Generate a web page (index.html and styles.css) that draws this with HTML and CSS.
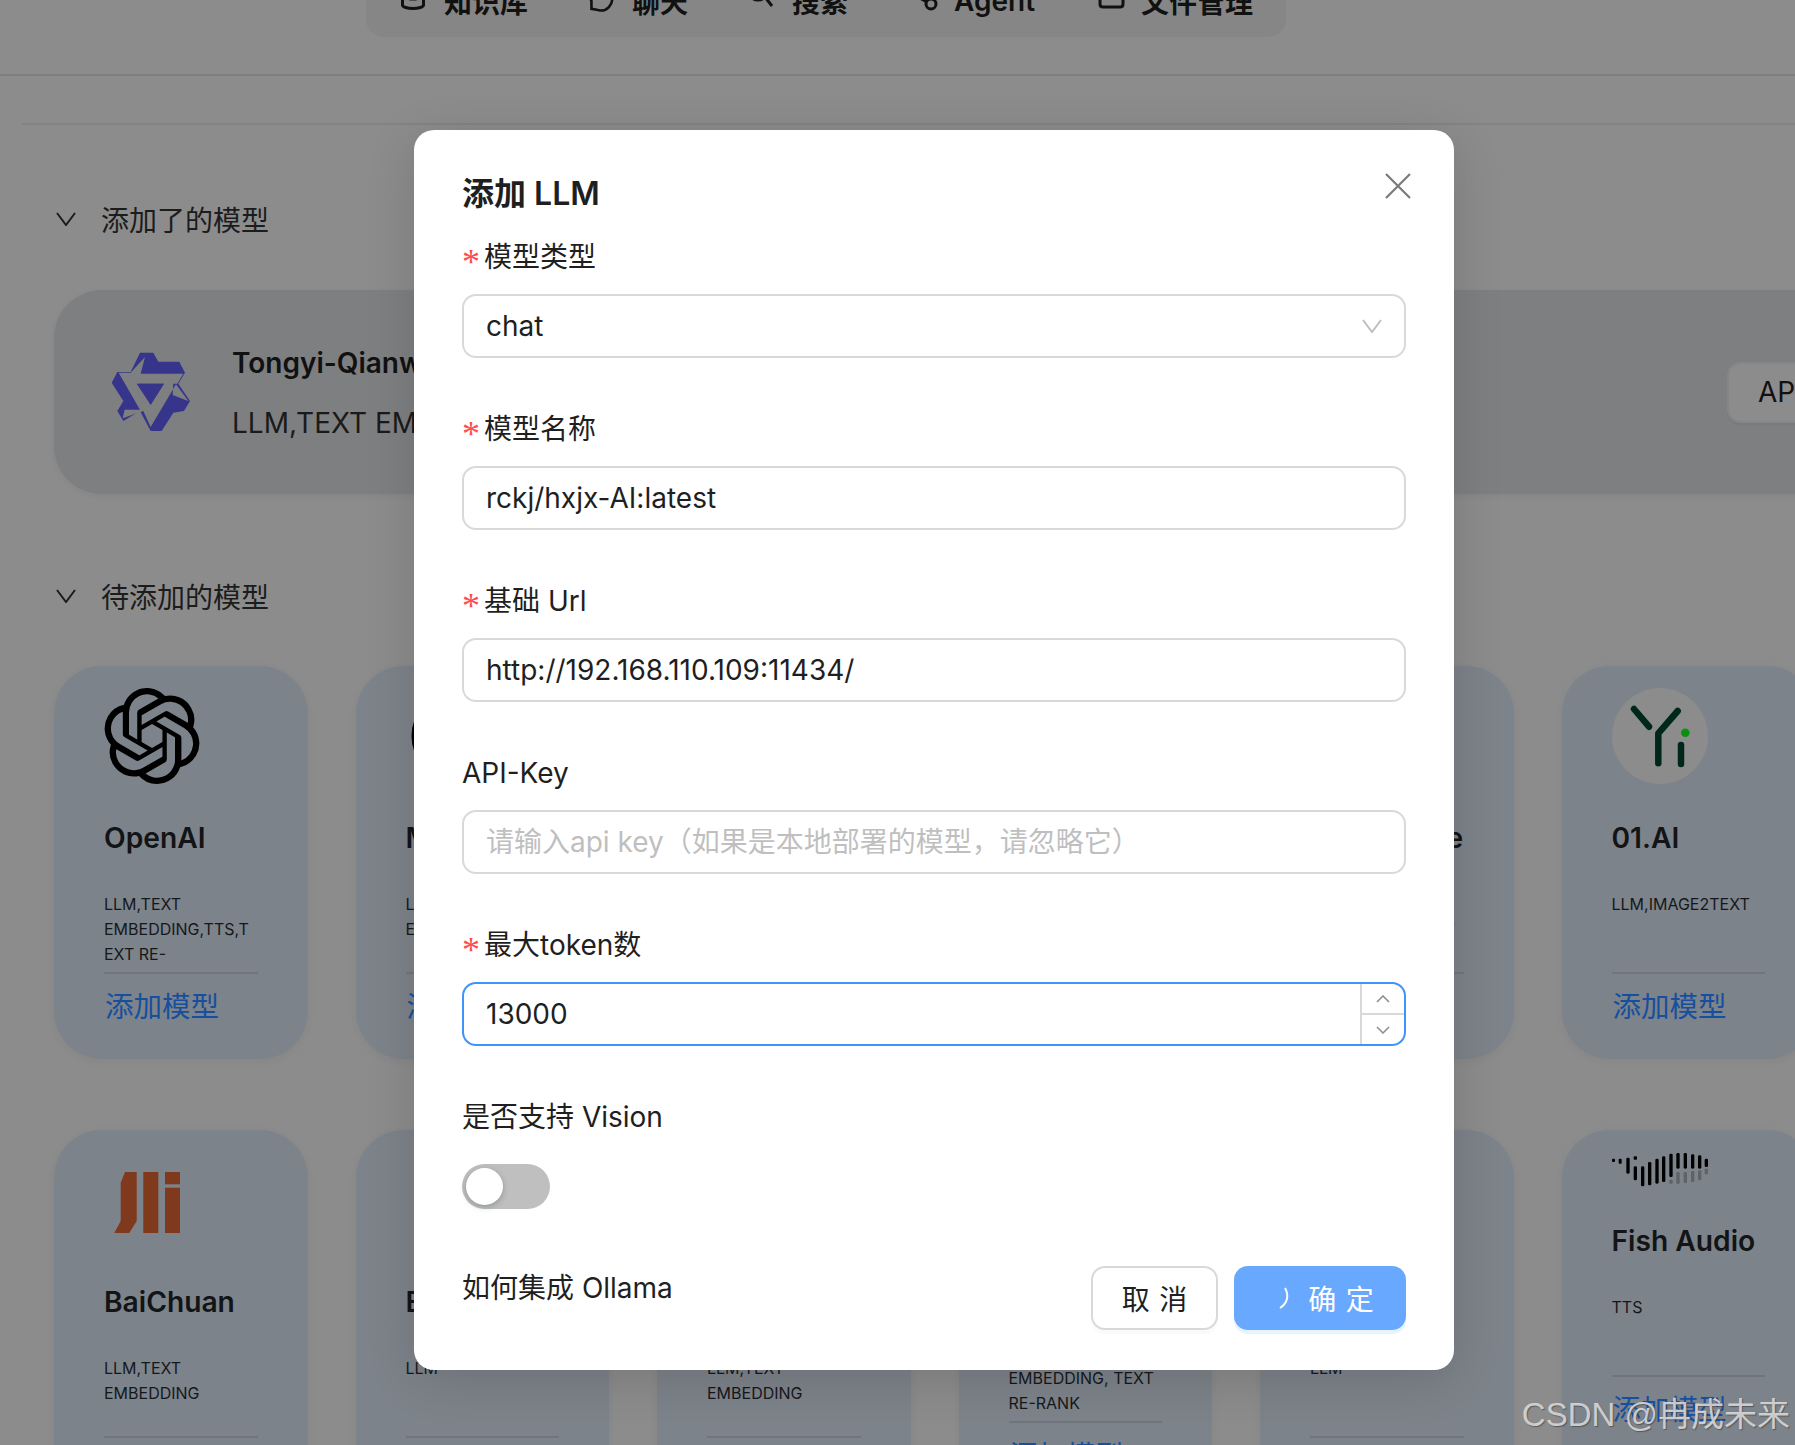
FILE: index.html
```html
<!DOCTYPE html>
<html lang="zh-CN">
<head>
<meta charset="utf-8">
<title>添加 LLM</title>
<link rel="stylesheet" href="styles.css">
</head>
<body>
<div class="page">
  <header class="topbar">
    <nav class="nav">
      <a class="nav-item"><svg class="nav-icon" viewBox="0 0 26 26"><ellipse cx="13" cy="6" rx="10.500" ry="5"/><path d="M2.500 6v11c0 2 5 3.500 10.500 3.500s10.500-1.500 10.500-3.500V6"/></svg>知识库</a>
      <a class="nav-item"><svg class="nav-icon" viewBox="0 0 30 26"><path d="M15 -6C7 -6 2 -1 2 6c0 3 1 5 2 7v9l6 1c2 1 3 1 5 1 7 0 13-6 13-14"/></svg>聊天</a>
      <a class="nav-item"><svg class="nav-icon" viewBox="0 0 26 26"><circle cx="10" cy="2" r="10"/><path d="M17 9l7 9"/></svg>搜索</a>
      <a class="nav-item nav-item-wide"><svg class="nav-icon" viewBox="0 0 26 26"><circle cx="5" cy="6" r="3.500"/><circle cx="21" cy="16" r="5"/><path d="M8 9l9 5M10 4l7 3"/></svg>Agent</a>
      <a class="nav-item"><svg class="nav-icon" viewBox="0 0 26 26"><path d="M3 -6v22c0 2 1 3 3 3h17c2 0 3-1 3-3V-6"/></svg>文件管理</a>
    </nav>
  </header>

  <main class="content">
    <div class="subline"></div>

    <div class="section-head first">
      <svg class="chevron" viewBox="0 0 20 14"><path d="M1 1l9 12 9-12"/></svg>
      <span>添加了的模型</span>
    </div>
    <section class="added-card">
      <div class="added-logo">
        <svg viewBox="0 0 96 96" width="96" height="96">
          <g transform="translate(-14 -13) scale(.3333)">
            <path class="qw-blue" d="M150 65H190L205 92H268L285 125L265 158L300 210L282 240L250 245L215 300H182L150 240L100 270L82 240L100 210L65 155L82 123H122Z"/>
            <path class="qw-gray" d="M165 78L122 125H86L150 236H104L98 262L160 240L182 288L258 160L295 210L248 192L250 158H262L280 128H152ZM140 158H222L182 222Z"/>
            <path class="qw-blue" d="M145 158H222L182 220Z"/>
          </g>
        </svg>
      </div>
      <div class="added-info">
        <div class="added-name">Tongyi-Qianwen</div>
        <div class="added-tags">LLM,TEXT EMBEDDING,TEXT RE-RANK,TTS,SPEECH2TEXT,MODERATION</div>
      </div>
      <button class="api-btn">API-Key</button>
    </section>

    <div class="section-head second">
      <svg class="chevron" viewBox="0 0 20 14"><path d="M1 1l9 12 9-12"/></svg>
      <span>待添加的模型</span>
    </div>

    <section class="grid">
      <article class="card">
        <div class="card-icon">
          <svg viewBox="0 0 24 24" width="96" height="96"><path d="M22.2819 9.8211a5.9847 5.9847 0 0 0-.5157-4.9108 6.0462 6.0462 0 0 0-6.5098-2.9A6.0651 6.0651 0 0 0 4.9807 4.1818a5.9847 5.9847 0 0 0-3.9977 2.9 6.0462 6.0462 0 0 0 .7427 7.0966 5.98 5.98 0 0 0 .511 4.9107 6.051 6.051 0 0 0 6.5146 2.9001A5.9847 5.9847 0 0 0 13.2599 24a6.0557 6.0557 0 0 0 5.7718-4.2058 5.9894 5.9894 0 0 0 3.9977-2.9001 6.0557 6.0557 0 0 0-.7475-7.0729zm-9.022 12.6081a4.4755 4.4755 0 0 1-2.8764-1.0408l.1419-.0804 4.7783-2.7582a.7948.7948 0 0 0 .3927-.6813v-6.7369l2.02 1.1686a.071.071 0 0 1 .038.052v5.5826a4.504 4.504 0 0 1-4.4945 4.4944zm-9.6607-4.1254a4.4708 4.4708 0 0 1-.5346-3.0137l.142.0852 4.783 2.7582a.7712.7712 0 0 0 .7806 0l5.8428-3.3685v2.3324a.0804.0804 0 0 1-.0332.0615L9.74 19.9502a4.4992 4.4992 0 0 1-6.1408-1.6464zM2.3408 7.8956a4.485 4.485 0 0 1 2.3655-1.9728V11.6a.7664.7664 0 0 0 .3879.6765l5.8144 3.3543-2.0201 1.1685a.0757.0757 0 0 1-.071 0l-4.8303-2.7865A4.504 4.504 0 0 1 2.3408 7.872zm16.5963 3.8558L13.1038 8.364 15.1192 7.2a.0757.0757 0 0 1 .071 0l4.8303 2.7913a4.4944 4.4944 0 0 1-.6765 8.1042v-5.6772a.79.79 0 0 0-.407-.667zm2.0107-3.0231l-.142-.0852-4.7735-2.7818a.7759.7759 0 0 0-.7854 0L9.409 9.2297V6.8974a.0662.0662 0 0 1 .0284-.0615l4.8303-2.7866a4.4992 4.4992 0 0 1 6.6802 4.66zM8.3065 12.863l-2.02-1.1638a.0804.0804 0 0 1-.038-.0567V6.0742a4.4992 4.4992 0 0 1 7.3757-3.4537l-.142.0805L8.704 5.459a.7948.7948 0 0 0-.3927.6813zm1.0976-2.3654l2.602-1.4998 2.6069 1.4998v2.9994l-2.5974 1.4997-2.6067-1.4997Z"/></svg>
        </div>
        <h3 class="card-title">OpenAI</h3>
        <p class="card-tags">LLM,TEXT EMBEDDING,TTS,TEXT RE-RANK,SPEECH2TEXT,MODERATION</p>
        <a class="card-link">添加模型</a>
      </article>
      <article class="card">
        <div class="card-icon"><svg viewBox="0 0 96 96" width="96" height="96"><circle class="ring" cx="48" cy="48" r="40"/></svg></div>
        <h3 class="card-title">Moonshot</h3>
        <p class="card-tags">LLM,TEXT EMBEDDING</p>
        <a class="card-link">添加模型</a>
      </article>
      <article class="card">
        <div class="card-icon"></div>
        <h3 class="card-title">DeepSeek</h3>
        <p class="card-tags">LLM</p>
        <a class="card-link">添加模型</a>
      </article>
      <article class="card">
        <div class="card-icon"></div>
        <h3 class="card-title">Ollama</h3>
        <p class="card-tags">LLM,TEXT EMBEDDING</p>
        <a class="card-link">添加模型</a>
      </article>
      <article class="card">
        <div class="card-icon"></div>
        <h3 class="card-title">VolcEngine</h3>
        <p class="card-tags">LLM,TEXT EMBEDDING,TTS,TEXT</p>
        <a class="card-link">添加模型</a>
      </article>
      <article class="card">
        <div class="card-icon">
          <svg viewBox="0 0 96 96" width="96" height="96">
            <circle class="yi-bg" cx="48" cy="48" r="48"/>
            <path class="yi-stroke" d="M22 21L37 38.700M65.700 23L46.300 45.300V75.300M69 57V76"/>
            <circle class="yi-dot" cx="73.300" cy="44.700" r="4.300"/>
          </svg>
        </div>
        <h3 class="card-title">01.AI</h3>
        <p class="card-tags">LLM,IMAGE2TEXT</p>
        <a class="card-link">添加模型</a>
      </article>

      <article class="card">
        <div class="card-icon">
          <svg viewBox="0 0 96 96" width="96" height="96">
            <path class="bc" d="M32.700 20H21L16.700 30.700V69L10.300 81H25.300L32.700 69Z"/>
            <rect class="bc" x="39.300" y="20" width="15" height="61"/>
            <rect class="bc" x="61" y="20" width="15" height="12.300"/>
            <rect class="bc" x="61" y="35.700" width="15" height="45.300"/>
          </svg>
        </div>
        <h3 class="card-title">BaiChuan</h3>
        <p class="card-tags">LLM,TEXT EMBEDDING</p>
        <a class="card-link">添加模型</a>
      </article>
      <article class="card">
        <div class="card-icon"></div>
        <h3 class="card-title">ERNIE</h3>
        <p class="card-tags">LLM</p>
        <a class="card-link">添加模型</a>
      </article>
      <article class="card">
        <div class="card-icon"></div>
        <h3 class="card-title">ZHIPU-AI</h3>
        <p class="card-tags">LLM,TEXT EMBEDDING</p>
        <a class="card-link">添加模型</a>
      </article>
      <article class="card card-mid">
        <div class="card-icon"></div>
        <h3 class="card-title">Jina</h3>
        <p class="card-tags">LLM, TEXT EMBEDDING, TEXT RE-RANK</p>
        <a class="card-link">添加模型</a>
      </article>
      <article class="card">
        <div class="card-icon"></div>
        <h3 class="card-title">Mistral</h3>
        <p class="card-tags">LLM</p>
        <a class="card-link">添加模型</a>
      </article>
      <article class="card card-short">
        <div class="card-icon">
          <svg viewBox="0 0 288 105" width="96" height="35">
            <g class="fish-dark">
              <rect x="0" y="20" width="9" height="10" rx="3"/>
              <rect x="20" y="20" width="9" height="15" rx="3"/>
              <rect x="43" y="17" width="10" height="48" rx="4"/>
              <rect x="65" y="13" width="10" height="10" rx="3"/>
              <rect x="65" y="43" width="10" height="42" rx="4"/>
              <rect x="87" y="43" width="10" height="60" rx="4"/>
              <rect x="108" y="30" width="10" height="70" rx="4"/>
              <rect x="130" y="20" width="10" height="75" rx="4"/>
              <rect x="150" y="13" width="10" height="77" rx="4"/>
              <rect x="172" y="5" width="10" height="70" rx="4"/>
              <rect x="193" y="3" width="10" height="47" rx="4"/>
              <rect x="215" y="3" width="10" height="47" rx="4"/>
              <rect x="237" y="7" width="10" height="43" rx="4"/>
              <rect x="258" y="10" width="10" height="40" rx="4"/>
              <rect x="278" y="20" width="10" height="25" rx="4"/>
            </g>
            <g class="fish-gray">
              <rect x="172" y="83" width="10" height="12" rx="3"/>
              <rect x="193" y="60" width="10" height="35" rx="3"/>
              <rect x="215" y="60" width="10" height="33" rx="3"/>
              <rect x="237" y="57" width="10" height="33" rx="3"/>
              <rect x="258" y="55" width="10" height="30" rx="3"/>
              <rect x="278" y="50" width="10" height="17" rx="3"/>
            </g>
          </svg>
        </div>
        <h3 class="card-title">Fish Audio</h3>
        <p class="card-tags">TTS</p>
        <a class="card-link">添加模型</a>
      </article>
    </section>
  </main>

  <div class="modal" role="dialog">
    <button class="modal-close" aria-label="关闭">
      <svg viewBox="0 0 26 26" width="26" height="26"><path d="M1 1l24 24M25 1L1 25"/></svg>
    </button>
    <h2 class="modal-title">添加 LLM</h2>

    <div class="field">
      <label class="field-label"><span class="req">*</span>模型类型</label>
      <div class="control select">
        <span>chat</span>
        <svg class="select-arrow" viewBox="0 0 20 14"><path d="M1 1l9 12 9-12"/></svg>
      </div>
    </div>
    <div class="field">
      <label class="field-label"><span class="req">*</span>模型名称</label>
      <input class="control" value="rckj/hxjx-AI:latest">
    </div>
    <div class="field">
      <label class="field-label"><span class="req">*</span>基础 Url</label>
      <input class="control" value="http://192.168.110.109:11434/">
    </div>
    <div class="field">
      <label class="field-label">API-Key</label>
      <input class="control" placeholder="请输入api key（如果是本地部署的模型，请忽略它）">
    </div>
    <div class="field">
      <label class="field-label"><span class="req">*</span>最大token数</label>
      <div class="control number">
        <span class="number-value">13000</span>
        <div class="number-handlers">
          <span class="handler"><svg viewBox="0 0 14 8" width="14" height="8"><path d="M1 7l6-6 6 6"/></svg></span>
          <span class="handler"><svg viewBox="0 0 14 8" width="14" height="8"><path d="M1 1l6 6 6-6"/></svg></span>
        </div>
      </div>
    </div>
    <div class="field field-switch">
      <label class="field-label">是否支持 Vision</label>
      <div class="switch"><span class="switch-knob"></span></div>
    </div>

    <div class="modal-footer">
      <a class="help">如何集成 Ollama</a>
      <div class="actions">
        <button class="btn btn-cancel"><span class="btn-text">取消</span></button>
        <button class="btn btn-ok">
          <svg class="spin" viewBox="0 0 24 24" width="24" height="24"><path d="M19 2c4 7 3 15-5 20"/></svg>
          <span class="btn-text">确定</span>
        </button>
      </div>
    </div>
  </div>

  <div class="watermark">CSDN @冉成未来</div>
</div>
</body>
</html>
```
FILE: styles.css
```css
* { box-sizing: border-box; }
html, body { margin: 0; padding: 0; }
body {
  width: 1795px;
  height: 1445px;
  overflow: hidden;
  font-family: Inter, "Noto Sans CJK SC", sans-serif;
  color: #15181b;
  background: #8c8c8c;
}
.page { position: relative; width: 1795px; height: 1445px; overflow: hidden; }

.topbar { display: flex; height: 76px; border-bottom: 2px solid #7f7f7f; padding-left: 366px; }
.nav {
  width: 920px;
  height: 73px;
  margin-top: -36px;
  padding-left: 4px;
  display: flex;
  align-items: center;
  background: #868686;
  border-radius: 18px;
  font-size: 28px;
  font-weight: 600;
  color: #111;
}
.nav-item { display: flex; align-items: center; gap: 18px; padding: 0 30px; white-space: nowrap; }
.nav-item-wide { padding: 0 32px; }
.nav-icon { width: 26px; height: 26px; overflow: visible; fill: none; stroke: #111; stroke-width: 3; }

.content { padding-top: 47px; }
.subline { height: 2px; margin-left: 22px; background: #838383; }

.section-head { display: flex; align-items: center; height: 40px; padding-left: 56px; font-size: 28px; color: #1c1c1c; }
.section-head.first { margin-top: 74px; }
.section-head.second { margin-top: 82px; }
.chevron { width: 20px; height: 14px; margin-right: 25px; fill: none; stroke: #1c1c1c; stroke-width: 2; }

.added-card {
  display: flex;
  align-items: center;
  width: 1900px;
  height: 204px;
  margin: 51px 0 0 54px;
  padding-left: 50px;
  background: #7e7f81;
  border-radius: 48px;
  box-shadow: 0 2px 6px rgba(0, 0, 0, .05);
}
.added-logo { width: 96px; height: 96px; margin-right: 32px; flex: none; }
.added-logo svg { overflow: visible; }
.qw-blue { fill: #37358b; }
.qw-gray { fill: #7e7f81; }
.added-info { width: 1495px; flex: none; padding-top: 1px; }
.added-name { font-size: 28px; font-weight: 600; line-height: 40px; color: #111; white-space: nowrap; }
.added-tags { margin-top: 20px; font-size: 28px; line-height: 40px; white-space: nowrap; overflow: hidden; color: #1a1a1a; }
.api-btn {
  width: 170px;
  height: 61px;
  padding: 0 29px;
  text-align: left;
  white-space: nowrap;
  font: 28px Inter, sans-serif;
  color: #111;
  background: #8c8c8c;
  border: 2px solid #868686;
  border-radius: 14px;
  box-shadow: 0 3px 0 rgba(0, 0, 0, .03);
  flex: none;
}

.grid {
  display: grid;
  grid-template-columns: repeat(6, 253.5px);
  gap: 71px 48px;
  margin: 50px 0 0 54px;
  width: 1800px;
}
.card {
  height: 393px;
  padding: 22px 50px 0;
  background: #7d838a;
  border-radius: 48px;
  box-shadow: 0 2px 8px rgba(0, 0, 0, .05);
}
.card-icon { height: 96px; }
.card-short .card-icon { height: 35px; }
.card-mid .card-icon { height: 81px; }
.card-title { margin: 34px 0 0; font-size: 28.200px; line-height: 40px; font-weight: 600; color: #121416; white-space: nowrap; }
.card-tags {
  height: 75px;
  margin: 34px 0 0;
  font-size: 16px;
  line-height: 25px;
  overflow: hidden;
  overflow-wrap: break-word;
  color: #15181b;
}
.card-link {
  display: block;
  margin: 5px 0 0;
  padding: 14px 0 0 1px;
  border-top: 2px solid #71767c;
  font-size: 28.500px;
  line-height: 38px;
  color: #154f9e;
  white-space: nowrap;
}
.ring { fill: none; stroke: #000; stroke-width: 5; }
.yi-bg { fill: #8c8c8c; }
.yi-stroke { fill: none; stroke: #00281a; stroke-width: 6.500; stroke-linecap: round; stroke-linejoin: round; }
.yi-dot { fill: #0b8f0f; }
.bc { fill: #7f3a1e; }
.fish-dark { fill: #000; }
.fish-gray { fill: #5f6266; }

.modal {
  position: absolute;
  left: 414px;
  top: 130px;
  width: 1040px;
  height: 1240px;
  padding: 41px 48px 0;
  background: #fff;
  border-radius: 20px;
  box-shadow: 0 10px 50px rgba(0, 0, 0, .14);
  color: #1f1f1f;
}
.modal-close {
  position: absolute;
  top: 43px;
  right: 43px;
  width: 26px;
  height: 26px;
  padding: 0;
  border: 0;
  background: none;
}
.modal-close svg { display: block; fill: none; stroke: #7a7a7a; stroke-width: 2.200; }
.modal-title { margin: 1px 0 12px; font-size: 32px; line-height: 44px; font-weight: 600; color: #1f1f1f; }

.field { margin-bottom: 42px; }
.field-switch { margin-bottom: 0; }
.field-label { display: block; height: 56px; margin-bottom: 10px; font-size: 28px; line-height: 58px; color: #1f1f1f; }
.req {
  display: inline-block;
  width: 22px;
  color: #ff4d4f;
  font-size: 36px;
  line-height: 1;
  vertical-align: -7px;
  font-family: "Liberation Serif", serif;
}
.control {
  display: flex;
  align-items: center;
  width: 100%;
  height: 64px;
  padding: 0 22px;
  font: 28px Inter, "Noto Sans CJK SC", sans-serif;
  color: #1f1f1f;
  background: #fff;
  border: 2px solid #d9d9d9;
  border-radius: 14px;
  outline: none;
}
.control::placeholder { color: #bfbfbf; opacity: 1; }
.select { justify-content: space-between; }
.select-arrow { width: 20px; height: 14px; margin-right: 0; fill: none; stroke: #bfbfbf; stroke-width: 2; }
.number { padding-right: 0; border-color: #3f94fb; }
.number-value { flex: 1; }
.number-handlers { display: flex; flex-direction: column; width: 44px; height: 100%; border-left: 2px solid #d9d9d9; }
.handler { flex: 1; display: flex; align-items: center; justify-content: center; }
.handler + .handler { border-top: 2px solid #d9d9d9; }
.handler svg { fill: none; stroke: #8c8c8c; stroke-width: 1.500; }

.switch {
  width: 88px;
  height: 45px;
  margin-top: 20px;
  padding: 4px;
  background: #bfbfbf;
  border-radius: 23px;
}
.switch-knob {
  display: block;
  width: 37px;
  height: 37px;
  background: #fff;
  border-radius: 50%;
  box-shadow: 0 2px 6px rgba(0, 35, 11, .25);
}

.modal-footer { display: flex; justify-content: space-between; align-items: flex-start; margin-top: 57px; }
.help { margin-top: 2px; font-size: 28px; line-height: 40px; color: #1f1f1f; }
.actions { display: flex; gap: 16px; }
.btn {
  display: flex;
  align-items: center;
  justify-content: center;
  height: 64px;
  font: 28px Inter, "Noto Sans CJK SC", sans-serif;
  border-radius: 14px;
  padding: 0;
}
.btn-text { letter-spacing: .34em; margin-right: -.34em; }
.btn-cancel { width: 127px; color: #1f1f1f; background: #fff; border: 2px solid #d9d9d9; box-shadow: 0 4px 0 rgba(0, 0, 0, .02); }
.btn-ok { width: 172px; gap: 18px; color: #fff; background: #69a8ff; border: 0; box-shadow: 0 4px 0 rgba(5, 145, 255, .1); }
.spin { fill: none; stroke: #fff; stroke-width: 2; }

.watermark {
  position: absolute;
  right: 5px;
  bottom: 7px;
  font-family: "Liberation Sans", "Noto Sans CJK SC", sans-serif;
  font-size: 33px;
  line-height: 46px;
  color: rgba(225, 225, 225, .85);
  text-shadow: 1px 1px 1px rgba(60, 60, 60, .6);
  white-space: nowrap;
}
```
